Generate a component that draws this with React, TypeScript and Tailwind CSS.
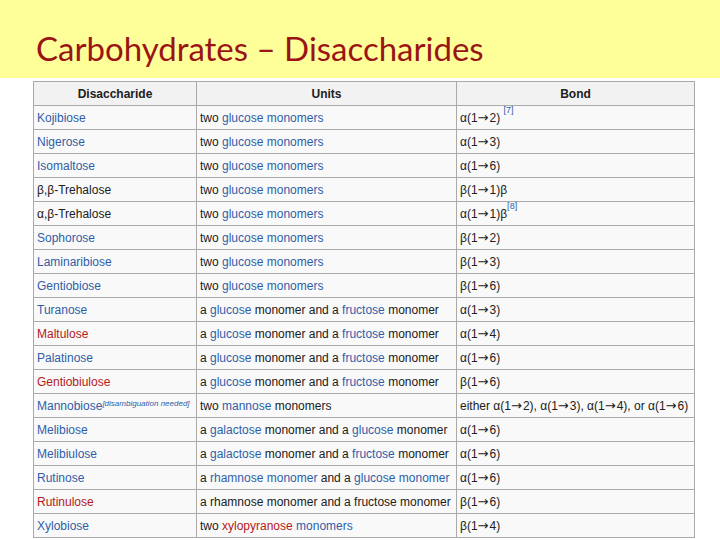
import React from "react";

type Seg = { t: string; c?: "b" | "r" };
type Row = { name: Seg[]; units: Seg[]; bond: React.ReactNode };

const A = (t: string): Seg => ({ t, c: "b" });
const R = (t: string): Seg => ({ t, c: "r" });
const P = (t: string): Seg => ({ t });

const twoGlu: Seg[] = [P("two "), A("glucose"), P(" "), A("monomers")];
const gluFru: Seg[] = [P("a "), A("glucose"), P(" monomer and a "), A("fructose"), P(" monomer")];

const Ref = ({ n }: { n: number }) => (
  <sup className="text-[9px] text-[#2f5ea8] align-super leading-none">[{n}]</sup>
);

const Ar = () => (
  <span style={{ fontFamily: "'DejaVu Sans', sans-serif" }} className="text-[13px] leading-[14px] pr-[1px]">
    →
  </span>
);

const B = (g: string, a: string, tail = "") => (
  <>
    {g}(1
    <Ar />
    {a}){tail}
  </>
);

const rows: Row[] = [
  { name: [A("Kojibiose")], units: twoGlu, bond: <>{B("α", "2")} <Ref n={7} /></> },
  { name: [A("Nigerose")], units: twoGlu, bond: B("α", "3") },
  { name: [A("Isomaltose")], units: twoGlu, bond: B("α", "6") },
  { name: [P("β,β-Trehalose")], units: twoGlu, bond: B("β", "1", "β") },
  { name: [P("α,β-Trehalose")], units: twoGlu, bond: <>{B("α", "1", "β")}<Ref n={8} /></> },
  { name: [A("Sophorose")], units: twoGlu, bond: B("β", "2") },
  { name: [A("Laminaribiose")], units: twoGlu, bond: B("β", "3") },
  { name: [A("Gentiobiose")], units: twoGlu, bond: B("β", "6") },
  { name: [A("Turanose")], units: gluFru, bond: B("α", "3") },
  { name: [R("Maltulose")], units: gluFru, bond: B("α", "4") },
  { name: [A("Palatinose")], units: gluFru, bond: B("α", "6") },
  { name: [R("Gentiobiulose")], units: gluFru, bond: B("β", "6") },
  {
    name: [A("Mannobiose")],
    units: [P("two "), A("mannose"), P(" monomers")],
    bond: (
      <>
        either {B("α", "2")}, {B("α", "3")}, {B("α", "4")}, or {B("α", "6")}
      </>
    ),
  },
  {
    name: [A("Melibiose")],
    units: [P("a "), A("galactose"), P(" monomer and a "), A("glucose"), P(" monomer")],
    bond: B("α", "6"),
  },
  {
    name: [A("Melibiulose")],
    units: [P("a "), A("galactose"), P(" monomer and a "), A("fructose"), P(" monomer")],
    bond: B("α", "6"),
  },
  {
    name: [A("Rutinose")],
    units: [P("a "), A("rhamnose monomer"), P(" and a "), A("glucose monomer")],
    bond: B("α", "6"),
  },
  {
    name: [R("Rutinulose")],
    units: [P("a rhamnose monomer and a fructose monomer")],
    bond: B("β", "6"),
  },
  {
    name: [A("Xylobiose")],
    units: [P("two "), R("xylopyranose"), P(" "), A("monomers")],
    bond: B("β", "4"),
  },
];

const Segs = ({ s }: { s: Seg[] }) => (
  <>
    {s.map((x, i) => (
      <span
        key={i}
        className={x.c === "b" ? "text-[#2f5ea8]" : x.c === "r" ? "text-[#b41a1a]" : "text-[#202020]"}
      >
        {x.t}
      </span>
    ))}
  </>
);

export default function App() {
  return (
    <div className="w-[720px] h-[540px] bg-white overflow-hidden relative">
      <div className="h-[78px] bg-[#ffff99] pl-[36px] pt-[29px]">
        <h1
          className="text-[33px] leading-[38px] text-[#9a1416] whitespace-nowrap"
          style={{ fontFamily: "Lato, 'Open Sans', sans-serif" }}
        >
          Carbohydrates – Disaccharides
        </h1>
      </div>
      <div className="pl-[33px] pt-[3px]">
        <table
          className="table-fixed w-[661px] border-collapse text-[12px] leading-[14px] text-[#202020] bg-[#f9f9f9]"
          style={{ fontFamily: "'Liberation Sans', Arial, sans-serif" }}
        >
          <colgroup>
            <col className="w-[163px]" />
            <col className="w-[260px]" />
            <col className="w-[238px]" />
          </colgroup>
          <thead>
            <tr className="h-[24px] bg-[#f2f2f2]">
              <th className="border border-[#aaaaaa] font-bold text-center px-[3px] p-0">Disaccharide</th>
              <th className="border border-[#aaaaaa] font-bold text-center px-[3px] p-0">Units</th>
              <th className="border border-[#aaaaaa] font-bold text-center px-[3px] p-0">Bond</th>
            </tr>
          </thead>
          <tbody>
            {rows.map((r, i) => (
              <tr key={i} className="h-[24px]">
                <td className="border border-[#aaaaaa] px-[3px] py-0 whitespace-nowrap">
                  <Segs s={r.name} />
                  {i === 12 && (
                    <sup className="text-[8px] italic text-[#2f5ea8] leading-none">
                      [disambiguation needed]
                    </sup>
                  )}
                </td>
                <td className="border border-[#aaaaaa] px-[3px] py-0 whitespace-nowrap">
                  <Segs s={r.units} />
                </td>
                <td className="border border-[#aaaaaa] px-[3px] py-0 whitespace-nowrap text-[#202020]">
                  {r.bond}
                </td>
              </tr>
            ))}
          </tbody>
        </table>
      </div>
    </div>
  );
}
